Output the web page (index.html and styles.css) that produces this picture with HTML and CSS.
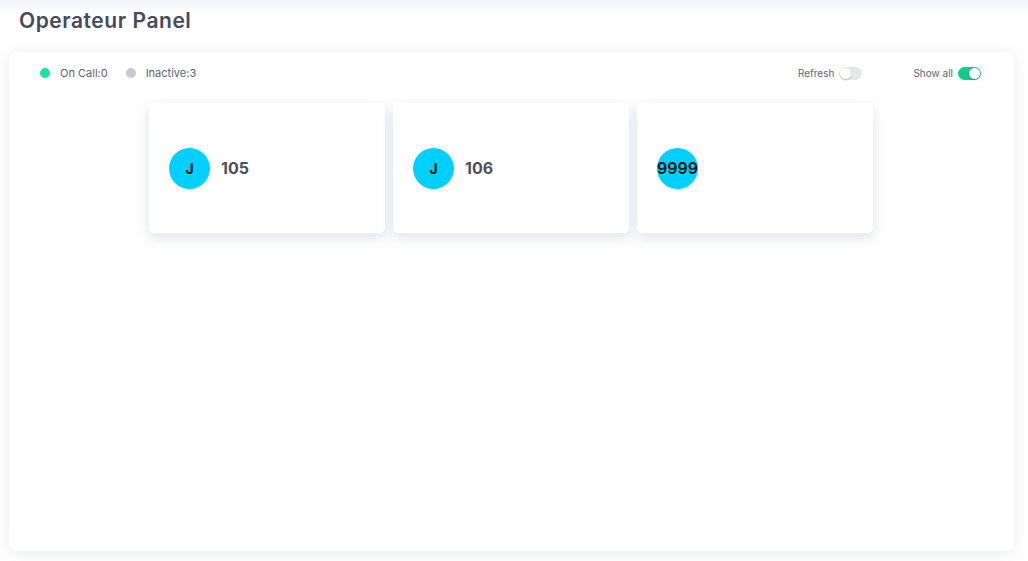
FILE: index.html
```html
<!DOCTYPE html>
<html>
<head>
<meta charset="utf-8">
<link rel="stylesheet" href="styles.css">
</head>
<body>
<div class="page">
  <h1 class="title">Operateur Panel</h1>
  <div class="panel">
    <div class="toolbar">
      <div class="legend">
        <span class="dot dot-green"></span><span class="legend-label">On Call:0</span>
        <span class="dot dot-gray"></span><span class="legend-label">Inactive:3</span>
      </div>
      <div class="controls">
        <label class="ctl">Refresh <span class="switch"></span></label>
        <label class="ctl">Show all <span class="switch on"></span></label>
      </div>
    </div>
    <div class="cards">
      <div class="card"><div class="avatar">J</div><div class="ext">105</div></div>
      <div class="card"><div class="avatar">J</div><div class="ext">106</div></div>
      <div class="card"><div class="avatar avatar-num">9999</div></div>
    </div>
  </div>
</div>
</body>
</html>
```
FILE: styles.css
```css
* { box-sizing: border-box; }
html, body { margin: 0; padding: 0; }
body {
  font-family: Inter, "Open Sans", sans-serif;
  background: #fff;
  width: 1028px;
  height: 561px;
  overflow: hidden;
}
.page {
  height: 561px;
  padding: 0 14px 10px 9px;
  display: flex;
  flex-direction: column;
  background: linear-gradient(#f3f4f7 0px, #fafbfc 8px, #ffffff 16px);
}
.title {
  margin: 8px 0 0 10px;
  font-size: 21px;
  line-height: 25px;
  font-weight: 600;
  color: #454a5c;
  letter-spacing: 0.55px;
}
.panel {
  margin-top: 19px;
  flex: 1;
  background: #fff;
  border-radius: 8px;
  box-shadow: 0 2px 14px rgba(70, 85, 130, 0.13);
  padding: 14px 33px 0 32px;
}
.toolbar {
  display: flex;
  justify-content: space-between;
  align-items: center;
  height: 14px;
}
.legend {
  display: flex;
  align-items: center;
  font-size: 11px;
  color: #5e6278;
}
.dot {
  width: 10px;
  height: 10px;
  border-radius: 50%;
  display: inline-block;
}
.dot-green { background: #12e8a0; margin-left: -1px; }
.dot-gray { background: #c6c8d2; margin-left: 18px; }
.legend-label { margin-left: 10px; }
.controls { display: flex; align-items: center; gap: 51px; }
.ctl {
  display: flex;
  align-items: center;
  gap: 5px;
  font-size: 10px;
  color: #5e6278;
}
.switch {
  position: relative;
  width: 23px;
  height: 13px;
  border-radius: 7px;
  background: #e6e7ea;
  display: inline-block;
}
.switch::after {
  content: "";
  position: absolute;
  top: 1px;
  left: 1px;
  width: 11px;
  height: 11px;
  border-radius: 50%;
  background: #fff;
  box-shadow: 0 1px 2px rgba(0,0,0,0.2);
}
.switch.on { background: #14c98b; }
.switch.on::after { left: 11px; }
.cards {
  display: flex;
  justify-content: center;
  gap: 8px;
  margin-top: 23px;
}
.card {
  width: 236px;
  height: 130px;
  background: #fff;
  border-radius: 5px;
  box-shadow: 0 5px 14px rgba(60, 75, 120, 0.16);
  display: flex;
  align-items: center;
  padding-left: 20px;
}
.avatar {
  width: 41px;
  height: 41px;
  border-radius: 50%;
  background: #00d0ff;
  color: #111;
  font-weight: 700;
  font-size: 14px;
  display: flex;
  align-items: center;
  justify-content: center;
  flex-shrink: 0;
}
.avatar-num { font-size: 16px; font-weight: 600; }
.ext {
  margin-left: 11px;
  font-size: 16px;
  font-weight: 700;
  color: #4b4f60;
}
```
